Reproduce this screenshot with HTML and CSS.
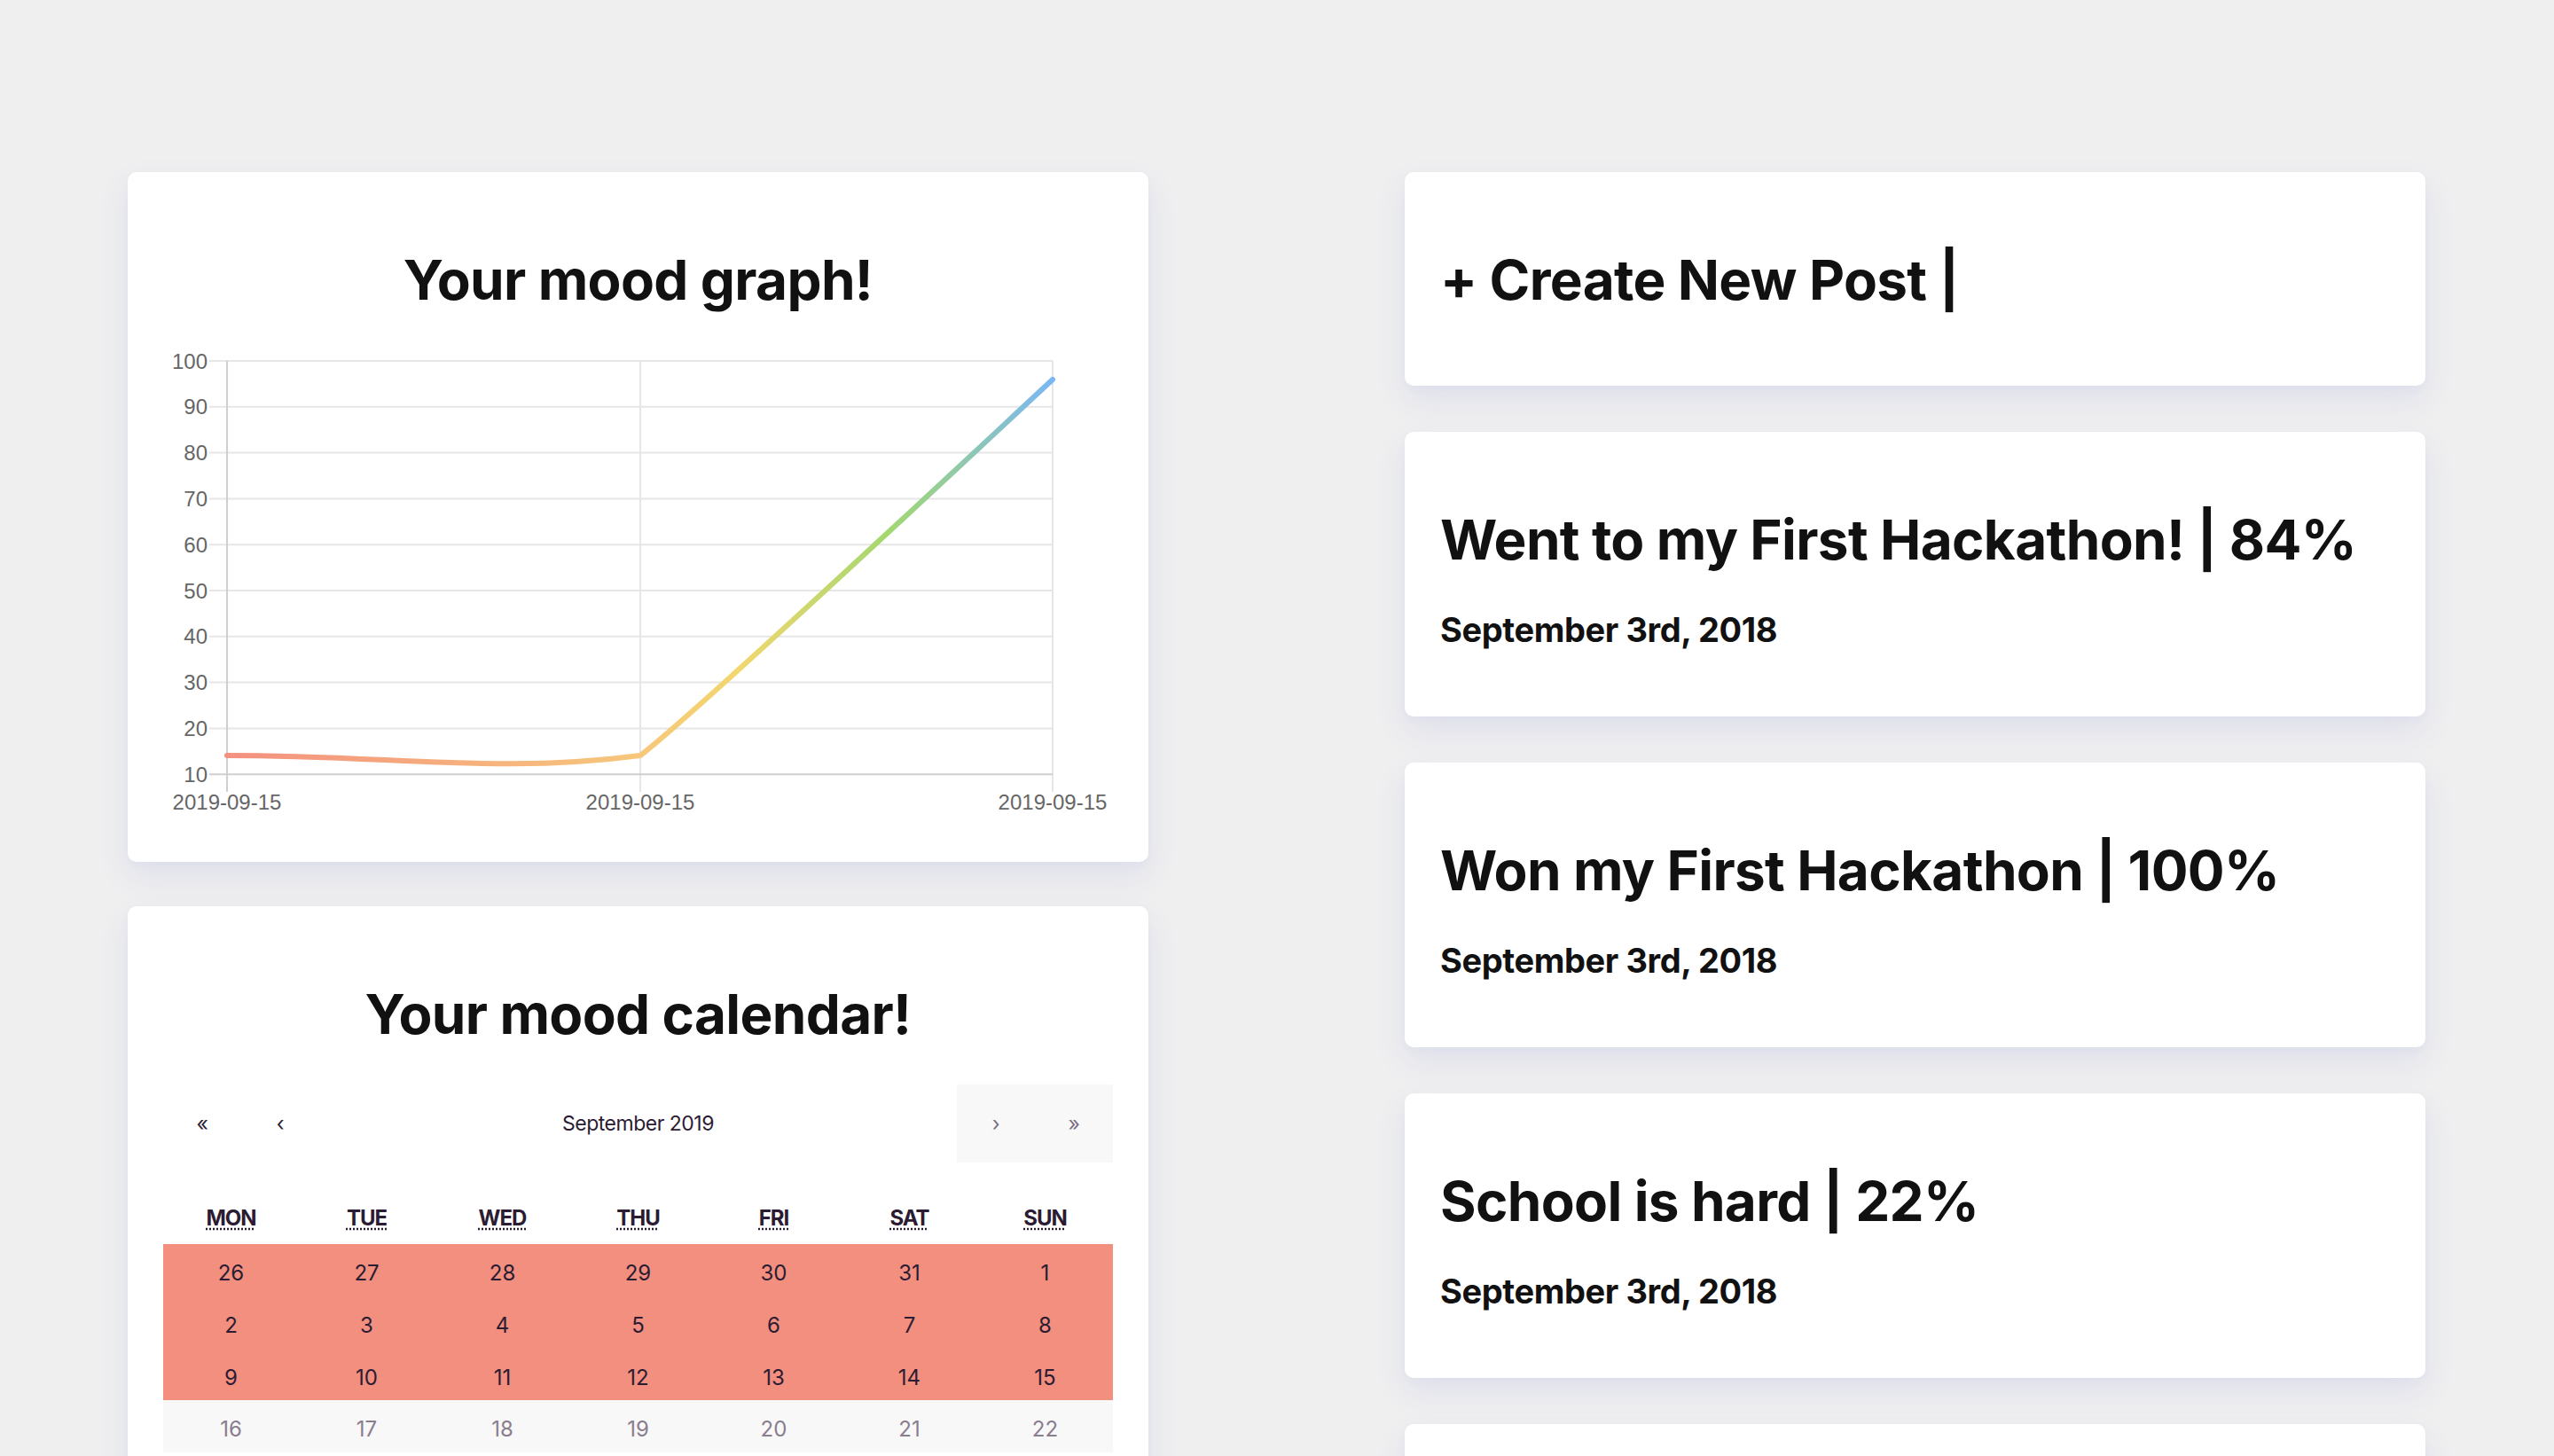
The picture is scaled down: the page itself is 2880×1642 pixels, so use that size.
FILE: index.html
```html
<!DOCTYPE html>
<html lang="en">
<head>
<meta charset="utf-8">
<title>Mood dashboard</title>
<link rel="stylesheet" href="styles.css">
</head>
<body>
<main class="page">
  <section class="col col-left">
    <div class="card graph-card">
      <h2 class="card-title">Your mood graph!</h2>
      <svg class="chart" width="1072" height="540" viewBox="0 0 1072 540" xmlns="http://www.w3.org/2000/svg">
        <defs>
          <linearGradient id="moodGrad" gradientUnits="userSpaceOnUse" x1="72" y1="0" x2="1003" y2="0">
            <stop offset="0" stop-color="#f4907f"/>
            <stop offset="0.5" stop-color="#f7c77b"/>
            <stop offset="0.62" stop-color="#f2d76e"/>
            <stop offset="0.8" stop-color="#a3d86f"/>
            <stop offset="1" stop-color="#7ab7f4"/>
          </linearGradient>
        </defs>
        <g class="grid">
          <line x1="52" y1="17" x2="1003" y2="17"/>
          <line x1="52" y1="68.8" x2="1003" y2="68.8"/>
          <line x1="52" y1="120.6" x2="1003" y2="120.6"/>
          <line x1="52" y1="172.4" x2="1003" y2="172.4"/>
          <line x1="52" y1="224.2" x2="1003" y2="224.2"/>
          <line x1="52" y1="276" x2="1003" y2="276"/>
          <line x1="52" y1="327.8" x2="1003" y2="327.8"/>
          <line x1="52" y1="379.6" x2="1003" y2="379.6"/>
          <line x1="52" y1="431.4" x2="1003" y2="431.4"/>
          <line x1="538" y1="17" x2="538" y2="503"/>
          <line x1="1003" y1="17" x2="1003" y2="503"/>
        </g>
        <g class="axis">
          <line x1="52" y1="483.2" x2="1003" y2="483.2"/>
          <line x1="72" y1="17" x2="72" y2="503"/>
        </g>
        <g class="ylabels">
          <text x="50" y="25.5">100</text>
          <text x="50" y="77.3">90</text>
          <text x="50" y="129.1">80</text>
          <text x="50" y="180.9">70</text>
          <text x="50" y="232.7">60</text>
          <text x="50" y="284.5">50</text>
          <text x="50" y="336.3">40</text>
          <text x="50" y="388.1">30</text>
          <text x="50" y="439.9">20</text>
          <text x="50" y="491.7">10</text>
        </g>
        <g class="xlabels">
          <text x="72" y="522.5">2019-09-15</text>
          <text x="538" y="522.5">2019-09-15</text>
          <text x="1003" y="522.5">2019-09-15</text>
        </g>
        <path class="mood-line" d="M72,462 C258.4,462 379.5,483 538,462 C606,410 936,100 1003,38"/>
      </svg>
    </div>

    <div class="card calendar-card">
      <h2 class="card-title">Your mood calendar!</h2>
      <div class="calendar">
        <nav class="cal-nav">
          <button class="cal-btn">«</button>
          <button class="cal-btn">‹</button>
          <button class="cal-label">September 2019</button>
          <button class="cal-btn disabled">›</button>
          <button class="cal-btn disabled">»</button>
        </nav>
        <div class="cal-weekdays">
          <div><abbr title="Monday">Mon</abbr></div>
          <div><abbr title="Tuesday">Tue</abbr></div>
          <div><abbr title="Wednesday">Wed</abbr></div>
          <div><abbr title="Thursday">Thu</abbr></div>
          <div><abbr title="Friday">Fri</abbr></div>
          <div><abbr title="Saturday">Sat</abbr></div>
          <div><abbr title="Sunday">Sun</abbr></div>
        </div>
        <div class="cal-days">
          <div class="tile mood">26</div><div class="tile mood">27</div><div class="tile mood">28</div><div class="tile mood">29</div><div class="tile mood">30</div><div class="tile mood">31</div><div class="tile mood">1</div>
          <div class="tile mood">2</div><div class="tile mood">3</div><div class="tile mood">4</div><div class="tile mood">5</div><div class="tile mood">6</div><div class="tile mood">7</div><div class="tile mood">8</div>
          <div class="tile mood">9</div><div class="tile mood">10</div><div class="tile mood">11</div><div class="tile mood">12</div><div class="tile mood">13</div><div class="tile mood">14</div><div class="tile mood">15</div>
          <div class="tile future">16</div><div class="tile future">17</div><div class="tile future">18</div><div class="tile future">19</div><div class="tile future">20</div><div class="tile future">21</div><div class="tile future">22</div>
        </div>
      </div>
    </div>
  </section>

  <section class="col col-right">
    <div class="card post-card create-card">
      <h2 class="post-title">+ Create New Post |</h2>
    </div>
    <div class="card post-card">
      <h2 class="post-title">Went to my First Hackathon! | 84%</h2>
      <p class="post-date">September 3rd, 2018</p>
    </div>
    <div class="card post-card">
      <h2 class="post-title">Won my First Hackathon | 100%</h2>
      <p class="post-date">September 3rd, 2018</p>
    </div>
    <div class="card post-card">
      <h2 class="post-title">School is hard | 22%</h2>
      <p class="post-date">September 3rd, 2018</p>
    </div>
    <div class="card post-card post-empty" aria-hidden="true"></div>
  </section>
</main>
</body>
</html>
```

FILE: styles.css
```css
html, body {
  margin: 0;
  padding: 0;
}

body {
  background: #efeff0;
  font-family: Inter, "Noto Sans", sans-serif;
  color: #111;
  overflow: hidden;
  height: 1642px;
}

.page {
  display: grid;
  grid-template-columns: 1151px 1151px;
  column-gap: 289px;
  padding: 194px 0 0 144px;
  align-items: start;
}

.col {
  display: flex;
  flex-direction: column;
}

.col-left {
  gap: 50px;
}

.col-right {
  gap: 51.5px;
}

.card {
  background: #fff;
  border-radius: 10px;
  box-shadow: 0 16px 36px rgba(70, 80, 200, 0.09), 0 4px 10px rgba(70, 80, 200, 0.03);
  box-sizing: border-box;
}

.card-title {
  margin: 0;
  font-size: 62px;
  line-height: 84px;
  font-weight: 700;
  letter-spacing: -0.65px;
  text-align: center;
  color: #111;
}

.graph-card {
  height: 778px;
  padding: 80px 40px 0;
}

.chart {
  display: block;
  margin-top: 32px;
}

.chart .grid line {
  stroke: #e6e6e6;
  stroke-width: 2;
}

.chart .axis line {
  stroke: #cfcfcf;
  stroke-width: 2;
}

.chart text {
  font-family: "Liberation Sans", Arial, sans-serif;
  font-size: 24px;
  fill: #666;
}

.chart .ylabels text {
  text-anchor: end;
}

.chart .xlabels text {
  text-anchor: middle;
}

.mood-line {
  fill: none;
  stroke: url(#moodGrad);
  stroke-width: 6;
  stroke-linecap: round;
  stroke-linejoin: round;
}

.calendar-card {
  height: 760px;
  padding: 80px 40px 0;
}

.calendar {
  margin-top: 37px;
  color: #2b1c33;
}

.cal-nav {
  display: flex;
  height: 88px;
  margin-bottom: 32px;
}

.cal-nav button {
  border: 0;
  background: none;
  font-family: Inter, "Noto Sans", sans-serif;
  font-size: 23px;
  letter-spacing: -0.5px;
  color: #2b1c33;
  padding: 0;
  margin: 0;
}

.cal-btn {
  width: 88px;
}

.cal-btn.disabled {
  background: #f8f8f8 !important;
  color: #7c6d83 !important;
}

.cal-label {
  flex: 1;
}

.cal-weekdays {
  display: grid;
  grid-template-columns: repeat(7, 1fr);
  height: 60px;
  align-items: center;
  text-align: center;
  font-size: 24px;
  font-weight: 700;
  text-transform: uppercase;
  letter-spacing: -1px;
}

.cal-weekdays abbr {
  text-decoration: underline dotted;
  text-underline-offset: 4px;
}

.cal-days {
  display: grid;
  grid-template-columns: repeat(7, 1fr);
  grid-auto-rows: 58.67px;
}

.tile {
  display: flex;
  align-items: center;
  justify-content: center;
  font-size: 24px;
  padding-top: 7px;
  box-sizing: border-box;
}

.tile.mood {
  background: #f28f7e;
  color: #2b1c33;
}

.tile.future {
  background: #f8f8f8;
  color: #8a7d8e;
}

.post-card {
  padding: 80px 40px 74.5px;
}

.create-card {
  padding-bottom: 77px;
}

.post-empty {
  height: 321.5px;
}

.post-title {
  margin: 0;
  font-size: 62px;
  line-height: 84px;
  font-weight: 700;
  letter-spacing: -0.65px;
  color: #111;
}

.post-date {
  margin: 35px 0 0;
  font-size: 38px;
  line-height: 48px;
  font-weight: 700;
  letter-spacing: -0.4px;
  color: #111;
}
```
